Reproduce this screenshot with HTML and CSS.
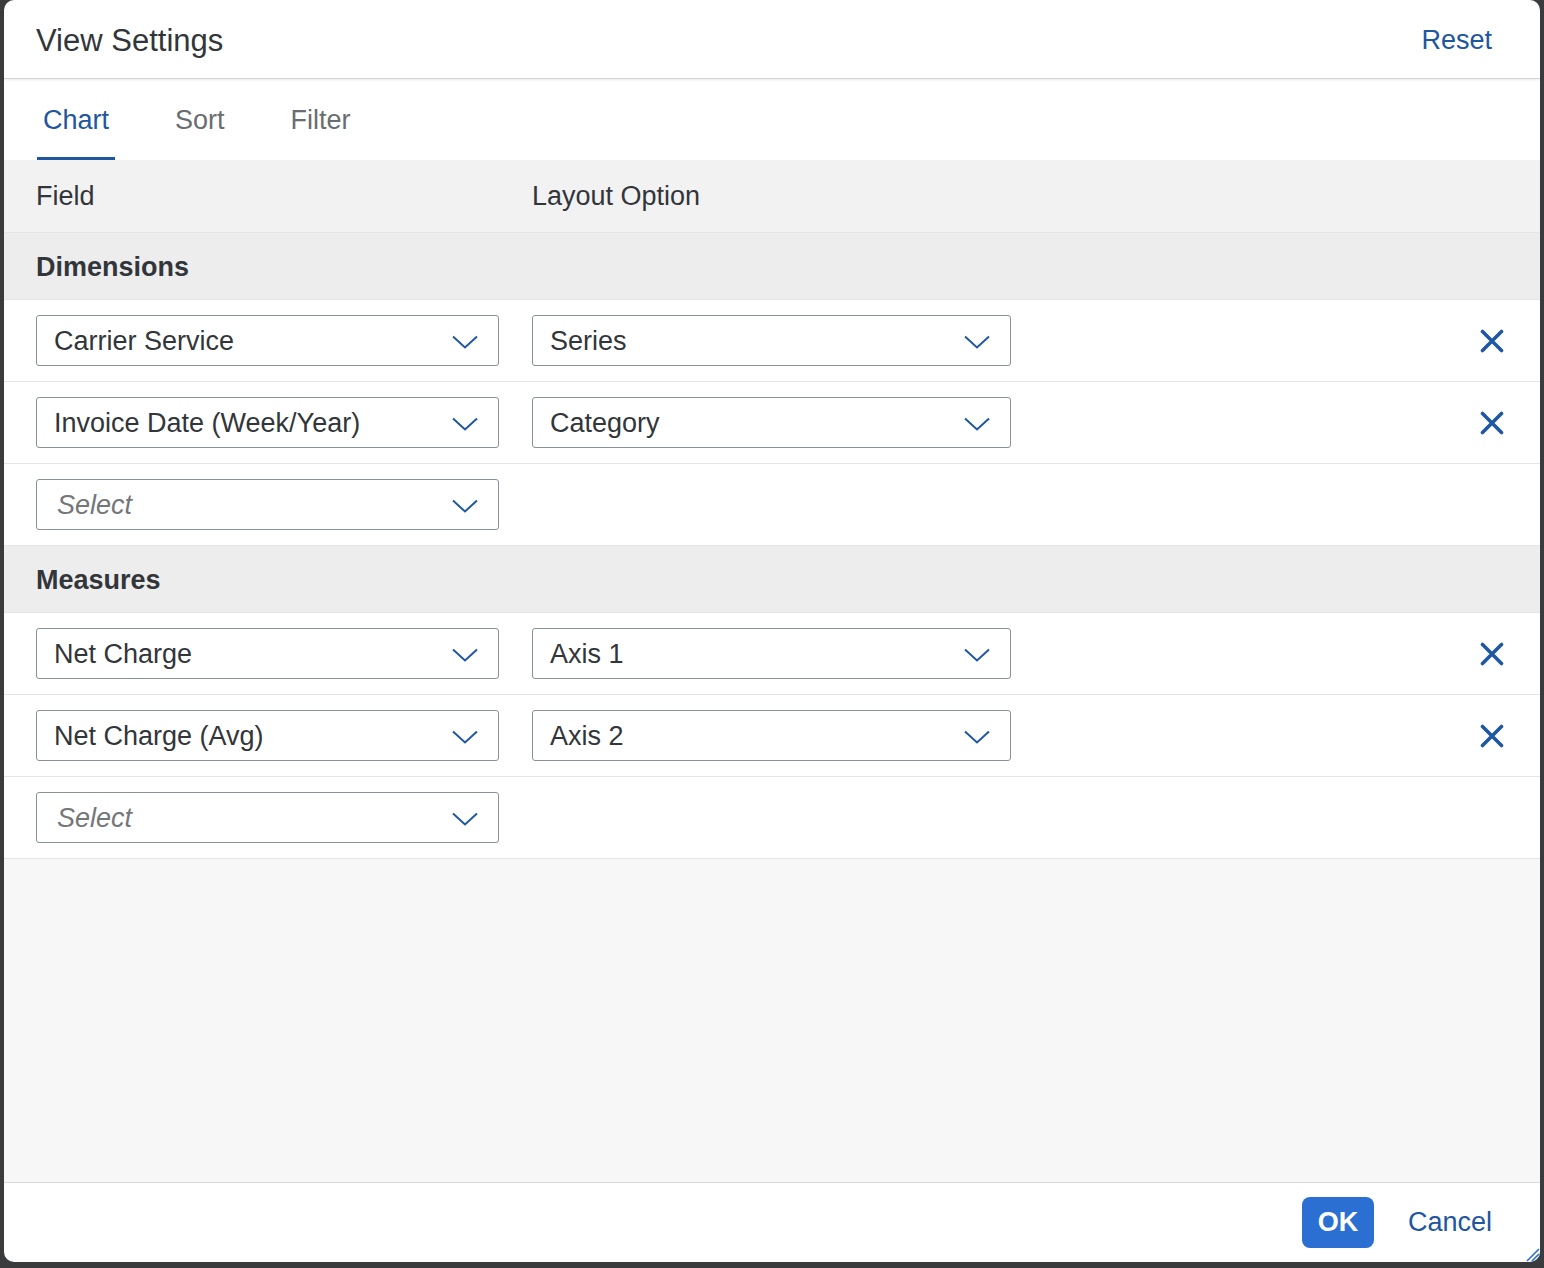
FILE: index.html
```html
<!DOCTYPE html>
<html lang="en">
<head>
  <meta charset="UTF-8">
  <title>View Settings</title>
  <link rel="stylesheet" href="styles.css">
</head>
<body>

  <div class="dialog">
    <header class="dialog-header">
      <h1>View Settings</h1>
      <button class="link-btn">Reset</button>
    </header>

    <nav class="tabs">
      <div class="tab active">Chart</div>
      <div class="tab">Sort</div>
      <div class="tab">Filter</div>
    </nav>

    <div class="dialog-body">
      <div class="row col-head">
        <div>Field</div>
        <div>Layout Option</div>
      </div>

      <div class="group-head">Dimensions</div>
      <div class="row item">
        <div class="select">Carrier Service<span class="chev"></span></div>
        <div class="select">Series<span class="chev"></span></div>
        <span class="remove"></span>
      </div>
      <div class="row item">
        <div class="select">Invoice Date (Week/Year)<span class="chev"></span></div>
        <div class="select">Category<span class="chev"></span></div>
        <span class="remove"></span>
      </div>
      <div class="row item">
        <div class="select placeholder">Select<span class="chev"></span></div>
      </div>

      <div class="group-head">Measures</div>
      <div class="row item">
        <div class="select">Net Charge<span class="chev"></span></div>
        <div class="select">Axis 1<span class="chev"></span></div>
        <span class="remove"></span>
      </div>
      <div class="row item">
        <div class="select">Net Charge (Avg)<span class="chev"></span></div>
        <div class="select">Axis 2<span class="chev"></span></div>
        <span class="remove"></span>
      </div>
      <div class="row item">
        <div class="select placeholder">Select<span class="chev"></span></div>
      </div>
    </div>

    <footer class="dialog-footer">
      <button class="ok-btn">OK</button>
      <button class="link-btn">Cancel</button>
    </footer>
    <span class="grip"></span>
  </div>

  <script>
    // icons are the same svg for every row
    const chevron = '<svg width="26" height="14" viewBox="0 0 26 14"><path d="M1 1.5 L13 12.5 L25 1.5" fill="none" stroke="#1f57a3" stroke-width="2"/></svg>';
    const cross = '<svg width="24" height="24" viewBox="0 0 24 24"><path d="M2.5 2.5 L21.5 21.5 M21.5 2.5 L2.5 21.5" fill="none" stroke="#1f57a3" stroke-width="3.6" stroke-linecap="round"/></svg>';
    const grip = '<svg width="16" height="16" viewBox="0 0 16 16"><path d="M15 3 L3 15 M15 8 L8 15 M15 12 L12 15" stroke="#2a6fd1" stroke-width="1.6"/></svg>';

    document.querySelectorAll('.chev').forEach(el => el.innerHTML = chevron);
    document.querySelectorAll('.remove').forEach(el => el.innerHTML = cross);
    document.querySelector('.grip').innerHTML = grip;
  </script>

</body>
</html>
```

FILE: styles.css
```css
body {
  margin: 0;
  background-color: #3a3b3c;
  font-family: 'Liberation Sans', Arial, sans-serif;
  color: #32363a;
  height: 1268px;
  overflow: hidden;
}

.dialog {
  position: relative;
  margin-left: 4px;
  width: 1536px;
  height: 1262px;
  background-color: #fff;
  border-radius: 10px;
  display: flex;
  flex-direction: column;
  overflow: hidden;
}

.dialog-header {
  height: 78px;
  flex-shrink: 0;
  display: flex;
  align-items: center;
  justify-content: space-between;
  padding: 0 48px 0 32px;
  border-bottom: 1px solid #d4d4d4;
  box-shadow: 0 1px 2px rgba(0, 0, 0, 0.08);
  position: relative;
  z-index: 1;
}

.dialog-header h1 {
  margin: 0;
  font-size: 31px;
  font-weight: normal;
  padding-top: 4px;
}

.dialog-header .link-btn {
  padding-top: 3px;
}

.link-btn {
  background: none;
  border: none;
  padding: 0;
  font-family: inherit;
  font-size: 27px;
  color: #1e56a0;
  cursor: pointer;
}

.tabs {
  height: 81px;
  flex-shrink: 0;
  display: flex;
  gap: 54px;
  padding-left: 33px;
  box-sizing: border-box;
}

.tab {
  padding: 4px 6px 0;
  display: flex;
  align-items: center;
  font-size: 27px;
  color: #6a6d70;
  border-bottom: 3px solid transparent;
}

.tab.active {
  color: #1e56a0;
  border-bottom-color: #1e56a0;
  border-radius: 2px 2px 0 0;
}

.dialog-body {
  flex: 1;
  background-color: #f7f7f7;
}

.row {
  display: grid;
  grid-template-columns: 463px 479px 1fr;
  column-gap: 33px;
  align-items: center;
  padding: 0 37px 0 32px;
  border-bottom: 1px solid #e5e5e5;
}

.col-head {
  height: 72px;
  background-color: #f2f2f2;
  font-size: 27px;
}

.group-head {
  height: 67px;
  display: flex;
  align-items: center;
  padding: 3px 0 0 32px;
  box-sizing: border-box;
  background-color: #ededed;
  border-bottom: 1px solid #e5e5e5;
  font-size: 27px;
  font-weight: bold;
}

.item {
  background-color: #fff;
  padding-top: 15px;
  padding-bottom: 15px;
}

.select {
  height: 51px;
  box-sizing: border-box;
  border: 1px solid #89919a;
  border-radius: 3px;
  background-color: #fff;
  display: flex;
  align-items: center;
  justify-content: space-between;
  padding: 2px 20px 0 17px;
  font-size: 27px;
}

.select.placeholder {
  font-style: italic;
  color: #74777a;
  padding-left: 20px;
}

.chev {
  display: flex;
}

.remove {
  justify-self: end;
  display: flex;
  margin-right: -1px;
}

.dialog-footer {
  height: 79px;
  flex-shrink: 0;
  display: flex;
  align-items: center;
  justify-content: flex-end;
  gap: 34px;
  padding-right: 48px;
  border-top: 1px solid #d9d9d9;
}

.ok-btn {
  width: 72px;
  height: 51px;
  border: none;
  border-radius: 8px;
  background-color: #2a6fd1;
  color: #fff;
  font-family: inherit;
  font-size: 27px;
  font-weight: bold;
  cursor: pointer;
}

.grip {
  position: absolute;
  right: 0;
  bottom: 0;
  display: flex;
}
```
